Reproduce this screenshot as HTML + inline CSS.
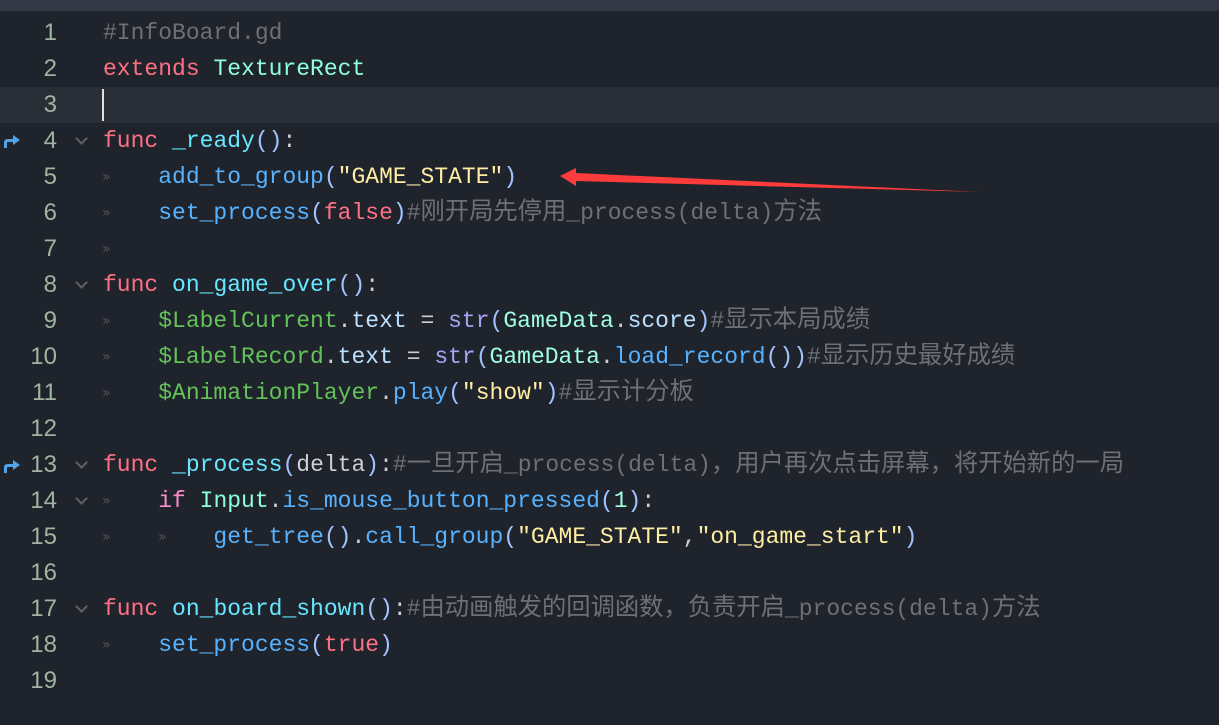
<!DOCTYPE html>
<html><head><meta charset="utf-8"><style>
body{margin:0;width:1219px;height:725px;background:#1f232b;overflow:hidden;position:relative;font-family:"Liberation Mono","Noto Sans CJK SC",monospace;font-size:23px;}
.top{position:absolute;left:0;top:0;width:1219px;height:11px;background:#333844;}
.cur{position:absolute;left:0;top:87px;width:1219px;height:36px;background:#2a2e37;}
.ln{position:absolute;left:0;width:57px;text-align:right;color:#a0b4a0;height:36px;line-height:36px;font-family:"Liberation Sans",sans-serif;font-size:24px;}
.code{position:absolute;left:103px;height:36px;line-height:36px;color:#cdcfd2;white-space:pre;}
.tab{position:absolute;color:#50545c;font-size:14px;height:36px;line-height:36px;font-family:"DejaVu Sans",sans-serif;}
.fold{position:absolute;left:77px;width:7px;height:7px;border-right:2.5px solid #5d6168;border-bottom:2.5px solid #5d6168;transform:rotate(45deg);}
.c{color:#6d7076}.k{color:#ff7085}.t{color:#8fffdb}.f{color:#66e6ff}.b{color:#57b3ff}.s{color:#ffeda1}.p{color:#a3c3ff}.i{color:#ff8ccc}.m{color:#63c259}.x{color:#bce0ff}.u{color:#a8a3f5}.n{color:#a0ffe0}
.z{font-size:24.3px;line-height:20px}
</style></head><body>
<div class="top"></div>
<div class="cur"></div>
<div style="position:absolute;left:102px;top:89px;width:2px;height:32px;background:#e0e0e0"></div>
<svg style="position:absolute;left:0;top:130px" width="22" height="20"><path d="M4 18 V12 Q4 9 8 9 H13 V5 L20 10 L13 15 V12 H8 Q7 12 7 13 V18 Z" fill="#4fa3e6"/></svg>
<svg style="position:absolute;left:0;top:455px" width="22" height="20"><path d="M4 18 V12 Q4 9 8 9 H13 V5 L20 10 L13 15 V12 H8 Q7 12 7 13 V18 Z" fill="#4fa3e6"/></svg>
<div class="ln" style="top:15px">1</div><div class="ln" style="top:51px">2</div><div class="ln" style="top:87px">3</div><div class="ln" style="top:123px">4</div><div class="ln" style="top:159px">5</div><div class="ln" style="top:195px">6</div><div class="ln" style="top:231px">7</div><div class="ln" style="top:267px">8</div><div class="ln" style="top:303px">9</div><div class="ln" style="top:339px">10</div><div class="ln" style="top:375px">11</div><div class="ln" style="top:411px">12</div><div class="ln" style="top:447px">13</div><div class="ln" style="top:483px">14</div><div class="ln" style="top:519px">15</div><div class="ln" style="top:555px">16</div><div class="ln" style="top:591px">17</div><div class="ln" style="top:627px">18</div><div class="ln" style="top:663px">19</div>
<div class="fold" style="top:134px"></div><div class="fold" style="top:278px"></div><div class="fold" style="top:458px"></div><div class="fold" style="top:494px"></div><div class="fold" style="top:602px"></div>
<div class="tab" style="left:102px;top:159px">»</div><div class="tab" style="left:102px;top:195px">»</div><div class="tab" style="left:102px;top:231px">»</div><div class="tab" style="left:102px;top:303px">»</div><div class="tab" style="left:102px;top:339px">»</div><div class="tab" style="left:102px;top:375px">»</div><div class="tab" style="left:102px;top:483px">»</div><div class="tab" style="left:102px;top:519px">»</div><div class="tab" style="left:158px;top:519px">»</div><div class="tab" style="left:102px;top:627px">»</div>
<div class="code" style="top:15px"><span class="c">#InfoBoard.gd</span></div>
<div class="code" style="top:51px"><span class="k">extends</span> <span class="t">TextureRect</span></div>
<div class="code" style="top:123px"><span class="k">func</span> <span class="f">_ready</span><span class="p">()</span>:</div>
<div class="code" style="top:159px">    <span class="b">add_to_group</span><span class="p">(</span><span class="s">"GAME_STATE"</span><span class="p">)</span></div>
<div class="code" style="top:195px">    <span class="b">set_process</span><span class="p">(</span><span class="k">false</span><span class="p">)</span><span class="c">#<span class="z">刚开局先停用</span>_process(delta)<span class="z">方法</span></span></div>
<div class="code" style="top:267px"><span class="k">func</span> <span class="f">on_game_over</span><span class="p">()</span>:</div>
<div class="code" style="top:303px">    <span class="m">$LabelCurrent</span>.<span class="x">text</span> = <span class="u">str</span><span class="p">(</span><span class="n">GameData</span>.<span class="x">score</span><span class="p">)</span><span class="c">#<span class="z">显示本局成绩</span></span></div>
<div class="code" style="top:339px">    <span class="m">$LabelRecord</span>.<span class="x">text</span> = <span class="u">str</span><span class="p">(</span><span class="n">GameData</span>.<span class="b">load_record</span><span class="p">())</span><span class="c">#<span class="z">显示历史最好成绩</span></span></div>
<div class="code" style="top:375px">    <span class="m">$AnimationPlayer</span>.<span class="b">play</span><span class="p">(</span><span class="s">"show"</span><span class="p">)</span><span class="c">#<span class="z">显示计分板</span></span></div>
<div class="code" style="top:447px"><span class="k">func</span> <span class="f">_process</span><span class="p">(</span>delta<span class="p">)</span>:<span class="c">#<span class="z">一旦开启</span>_process(delta)<span class="z">，用户再次点击屏幕，将开始新的一局</span></span></div>
<div class="code" style="top:483px">    <span class="i">if</span> <span class="t">Input</span>.<span class="b">is_mouse_button_pressed</span><span class="p">(</span><span class="n">1</span><span class="p">)</span>:</div>
<div class="code" style="top:519px">        <span class="b">get_tree</span><span class="p">()</span>.<span class="b">call_group</span><span class="p">(</span><span class="s">"GAME_STATE"</span>,<span class="s">"on_game_start"</span><span class="p">)</span></div>
<div class="code" style="top:591px"><span class="k">func</span> <span class="f">on_board_shown</span><span class="p">()</span>:<span class="c">#<span class="z">由动画触发的回调函数，负责开启</span>_process(delta)<span class="z">方法</span></span></div>
<div class="code" style="top:627px">    <span class="b">set_process</span><span class="p">(</span><span class="k">true</span><span class="p">)</span></div>
<svg style="position:absolute;left:0;top:0" width="1219" height="725"><path d="M560 176 L576 168 L576 173 L980 192 L576 181 L576 186 Z" fill="#ff3b3b"/></svg>
</body></html>
